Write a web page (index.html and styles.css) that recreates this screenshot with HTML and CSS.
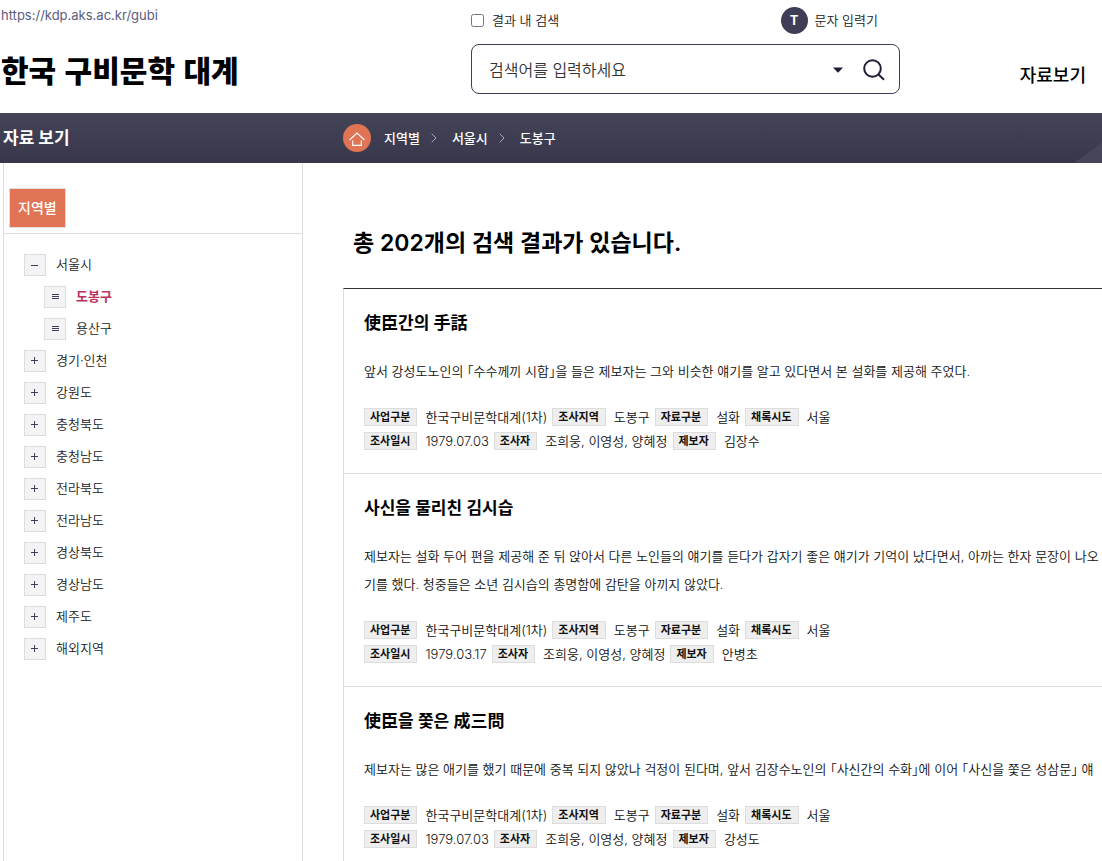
FILE: index.html
```html
<!DOCTYPE html>
<html lang="ko">
<head>
<meta charset="utf-8">
<title>한국 구비문학 대계</title>
<link rel="stylesheet" href="styles.css">
</head>
<body>
<header class="header">
  <div class="brand">
    <a class="site-url" href="#">https://kdp.aks.ac.kr/gubi</a>
    <a class="logo" href="#">한국 구비문학 대계</a>
  </div>
  <form class="search">
    <div class="search-options">
      <label class="within"><input class="checkbox" type="checkbox">결과 내 검색</label>
      <button class="char-input" type="button"><span class="char-badge">T</span>문자 입력기</button>
    </div>
    <div class="search-box">
      <input class="search-input" type="text" placeholder="검색어를 입력하세요" aria-label="검색어">
      <button class="icon-button" type="button" aria-label="검색 옵션"><svg width="10" height="6" viewBox="0 0 10 6"><path d="M0 0.5h10L5.6 5.2q-.6.6-1.2 0z" fill="#1f1f38"/></svg></button>
      <button class="icon-button" type="submit" aria-label="검색"><svg width="22" height="22" viewBox="0 0 22 22" fill="none" stroke="#1f1f38" stroke-width="2"><circle cx="9.5" cy="9.5" r="8.3"/><path d="M15.5 15.5l5.5 5.2"/></svg></button>
    </div>
  </form>
  <nav class="main-nav"><a class="nav-link" href="#">자료보기</a></nav>
</header>

<div class="title-bar">
  <h1 class="section-title">자료 보기</h1>
  <nav class="breadcrumb" aria-label="위치">
    <a class="home" href="#" aria-label="홈"><svg width="16" height="15" viewBox="0 0 16 15" fill="none" stroke="#fff" stroke-width="1.1"><path d="M.5 9L8 2l7.500 7M3.700 9.500V14.400h8.600V9.500"/></svg></a>
    <a class="crumb" href="#">지역별</a>
    <svg class="chevron" width="6" height="10" viewBox="0 0 6 10"><path d="M.7.7L5 5 .7 9.300"/></svg>
    <a class="crumb" href="#">서울시</a>
    <svg class="chevron" width="6" height="10" viewBox="0 0 6 10"><path d="M.7.7L5 5 .7 9.300"/></svg>
    <a class="crumb" href="#">도봉구</a>
  </nav>
</div>

<div class="layout">
  <aside class="sidebar">
    <div class="tabs"><button class="tab" type="button">지역별</button></div>
    <ul class="tree">
      <li class="node"><button class="toggle minus" type="button" aria-label="접기"></button><a class="region" href="#">서울시</a></li>
      <li class="node child"><span class="toggle leaf"></span><a class="region current" href="#">도봉구</a></li>
      <li class="node child"><span class="toggle leaf"></span><a class="region" href="#">용산구</a></li>
      <li class="node"><button class="toggle plus" type="button" aria-label="펼치기"></button><a class="region" href="#">경기·인천</a></li>
      <li class="node"><button class="toggle plus" type="button" aria-label="펼치기"></button><a class="region" href="#">강원도</a></li>
      <li class="node"><button class="toggle plus" type="button" aria-label="펼치기"></button><a class="region" href="#">충청북도</a></li>
      <li class="node"><button class="toggle plus" type="button" aria-label="펼치기"></button><a class="region" href="#">충청남도</a></li>
      <li class="node"><button class="toggle plus" type="button" aria-label="펼치기"></button><a class="region" href="#">전라북도</a></li>
      <li class="node"><button class="toggle plus" type="button" aria-label="펼치기"></button><a class="region" href="#">전라남도</a></li>
      <li class="node"><button class="toggle plus" type="button" aria-label="펼치기"></button><a class="region" href="#">경상북도</a></li>
      <li class="node"><button class="toggle plus" type="button" aria-label="펼치기"></button><a class="region" href="#">경상남도</a></li>
      <li class="node"><button class="toggle plus" type="button" aria-label="펼치기"></button><a class="region" href="#">제주도</a></li>
      <li class="node"><button class="toggle plus" type="button" aria-label="펼치기"></button><a class="region" href="#">해외지역</a></li>
    </ul>
  </aside>

  <main class="results">
    <h2 class="summary">총 202개의 검색 결과가 있습니다.</h2>
    <div class="list">
      <article class="item">
        <h3 class="item-title">使臣간의 手話</h3>
        <p class="excerpt">앞서 강성도노인의 「수수께끼 시합」을 들은 제보자는 그와 비슷한 얘기를 알고 있다면서 본 설화를 제공해 주었다.</p>
        <dl class="meta">
          <div class="pair"><dt class="tag">사업구분</dt><dd class="value">한국구비문학대계(1차)</dd></div>
          <div class="pair"><dt class="tag">조사지역</dt><dd class="value">도봉구</dd></div>
          <div class="pair"><dt class="tag">자료구분</dt><dd class="value">설화</dd></div>
          <div class="pair"><dt class="tag">채록시도</dt><dd class="value">서울</dd></div>
        </dl>
        <dl class="meta">
          <div class="pair"><dt class="tag">조사일시</dt><dd class="value">1979.07.03</dd></div>
          <div class="pair"><dt class="tag">조사자</dt><dd class="value">조희웅, 이영성, 양혜정</dd></div>
          <div class="pair"><dt class="tag">제보자</dt><dd class="value">김장수</dd></div>
        </dl>
      </article>
      <article class="item">
        <h3 class="item-title">사신을 물리친 김시습</h3>
        <p class="excerpt">제보자는 설화 두어 편을 제공해 준 뒤 앉아서 다른 노인들의 얘기를 듣다가 갑자기 좋은 얘기가 기억이 났다면서, 아까는 한자 문장이 나오<br>기를 했다. 청중들은 소년 김시습의 총명함에 감탄을 아끼지 않았다.</p>
        <dl class="meta">
          <div class="pair"><dt class="tag">사업구분</dt><dd class="value">한국구비문학대계(1차)</dd></div>
          <div class="pair"><dt class="tag">조사지역</dt><dd class="value">도봉구</dd></div>
          <div class="pair"><dt class="tag">자료구분</dt><dd class="value">설화</dd></div>
          <div class="pair"><dt class="tag">채록시도</dt><dd class="value">서울</dd></div>
        </dl>
        <dl class="meta">
          <div class="pair"><dt class="tag">조사일시</dt><dd class="value">1979.03.17</dd></div>
          <div class="pair"><dt class="tag">조사자</dt><dd class="value">조희웅, 이영성, 양혜정</dd></div>
          <div class="pair"><dt class="tag">제보자</dt><dd class="value">안병초</dd></div>
        </dl>
      </article>
      <article class="item">
        <h3 class="item-title">使臣을 쫓은 成三問</h3>
        <p class="excerpt">제보자는 많은 애기를 했기 때문에 중복 되지 않았나 걱정이 된다며, 앞서 김장수노인의 「사신간의 수화」에 이어 「사신을 쫓은 성삼문」 얘</p>
        <dl class="meta">
          <div class="pair"><dt class="tag">사업구분</dt><dd class="value">한국구비문학대계(1차)</dd></div>
          <div class="pair"><dt class="tag">조사지역</dt><dd class="value">도봉구</dd></div>
          <div class="pair"><dt class="tag">자료구분</dt><dd class="value">설화</dd></div>
          <div class="pair"><dt class="tag">채록시도</dt><dd class="value">서울</dd></div>
        </dl>
        <dl class="meta">
          <div class="pair"><dt class="tag">조사일시</dt><dd class="value">1979.07.03</dd></div>
          <div class="pair"><dt class="tag">조사자</dt><dd class="value">조희웅, 이영성, 양혜정</dd></div>
          <div class="pair"><dt class="tag">제보자</dt><dd class="value">강성도</dd></div>
        </dl>
      </article>
    </div>
  </main>
</div>
</body>
</html>
```
FILE: styles.css
```css
* { box-sizing: border-box; margin: 0; padding: 0; }

body {
  font-family: Inter, "Noto Sans CJK KR", sans-serif;
  font-size: 13px;
  font-weight: 350;
  line-height: 24px;
  color: #222;
  background: #fff;
  height: 100vh;
  overflow: hidden;
  display: flex;
  flex-direction: column;
}

a { color: inherit; text-decoration: none; }
button { font: inherit; color: inherit; background: none; border: 0; cursor: pointer; }
ul { list-style: none; }

/* header */
.header {
  display: grid;
  grid-template-columns: 471px 429px 1fr;
  flex: none;
  height: 113px;
}
.brand { display: flex; flex-direction: column; padding: 3px 1px; gap: 20px; }
.site-url { color: #5b5b80; font-weight: 400; }
.logo { font-size: 30px; font-weight: 900; line-height: 44px; color: #000; font-family: "Noto Sans CJK KR", sans-serif; }
.search { padding-top: 6px; }
.search-options { display: flex; justify-content: space-between; align-items: center; height: 28px; padding-right: 22px; }
.within { display: flex; align-items: center; gap: 8px; }
.checkbox { width: 13px; height: 13px; }
.char-input { display: flex; align-items: center; gap: 7px; }
.char-badge {
  width: 27px; height: 27px; border-radius: 50%;
  background: #3f3e56; color: #fff; font-weight: 700; line-height: 27px; text-align: center;
}
.search-box {
  display: flex; align-items: center; gap: 20px;
  height: 50px; margin-top: 10px; padding: 2px 14px 0 17px;
  border: 1px solid #3f3e56; border-radius: 8px;
}
.search-input { flex: 1; min-width: 0; border: 0; outline: 0; font: inherit; font-size: 16px; background: none; }
.search-input::placeholder { color: #333; opacity: 1; }
.icon-button { display: flex; }
.main-nav { display: flex; justify-content: flex-end; padding: 63px 16px 0 0; }
.nav-link { font-size: 18px; font-weight: 500; line-height: 26px; color: #000; }

/* title bar */
.title-bar {
  display: grid;
  grid-template-columns: 343px 1fr;
  align-items: center;
  flex: none;
  height: 50px;
  color: #fff;
  background:
    linear-gradient(to bottom right, transparent 50%, #474659 50%) right bottom / 28px 20px no-repeat,
    linear-gradient(#444459, #38374a);
}
.section-title { font-size: 17px; font-weight: 700; padding-left: 3px; }
.breadcrumb { display: flex; align-items: center; }
.home {
  display: flex; align-items: center; justify-content: center;
  width: 28px; height: 28px; margin-right: 13px; border-radius: 50%; background: #e17454;
}
.crumb { font-weight: 500; }
.chevron { margin: 0 15px 0 11px; fill: none; stroke: #aaaab5; stroke-width: 1; }

/* layout */
.layout { display: grid; grid-template-columns: 300px 1fr; gap: 40px; flex: 1; min-height: 0; padding-left: 3px; }
.sidebar { border: solid #ddd; border-width: 0 1px; }
.tabs { padding: 25px 5px 5px; border-bottom: 1px solid #ddd; }
.tab {
  display: block; height: 40px; padding: 0 8px;
  border: 1px solid #ddd; background: #e17454; color: #fff; font-size: 14px; font-weight: 500;
}
.tree { display: flex; flex-direction: column; gap: 10px; padding: 20px; }
.node { display: flex; align-items: center; gap: 10px; height: 22px; }
.child { margin-left: 20px; }
.toggle {
  width: 22px; height: 22px; border: 1px solid #ddd;
  background: #f4f4f6 no-repeat;
}
.minus { background-image: linear-gradient(#3f3e56, #3f3e56); background-size: 7px 1px; background-position: 6px 10px; }
.plus {
  background-image: linear-gradient(#3f3e56, #3f3e56), linear-gradient(#3f3e56, #3f3e56);
  background-size: 7px 1px, 1px 7px;
  background-position: 6px 9px, 9px 6px;
}
.leaf {
  background-image: repeating-linear-gradient(#3f3e56 0 1px, transparent 1px 2px);
  background-size: 7px 5px;
  background-position: 7px 7px;
}
.region { padding-bottom: 2px; line-height: 22px; }
.current { color: #b9345a; font-weight: 700; }

/* results */
.results { min-width: 0; overflow: hidden; color: #111; }
.summary { padding: 64px 10px 29px; font-size: 23px; font-weight: 600; line-height: 32px; color: #000; }
.list { border-top: 1px solid #333; border-left: 1px solid #ddd; }
.item { padding: 20px; border-bottom: 1px solid #ddd; }
.item-title { font-size: 17px; font-weight: 600; line-height: 28px; color: #000; }
.excerpt { margin: 20px 0; line-height: 28px; white-space: nowrap; font-feature-settings: "halt"; }
.meta, .pair { display: flex; align-items: center; }
.meta { gap: 5px; height: 24px; }
.pair { gap: 8px; }
.tag {
  height: 18px; padding: 0 6px 0 5px; border: 1px solid #ddd;
  background: #eee; color: #111; font-size: 11px; font-weight: 700; line-height: 16px;
}
```
